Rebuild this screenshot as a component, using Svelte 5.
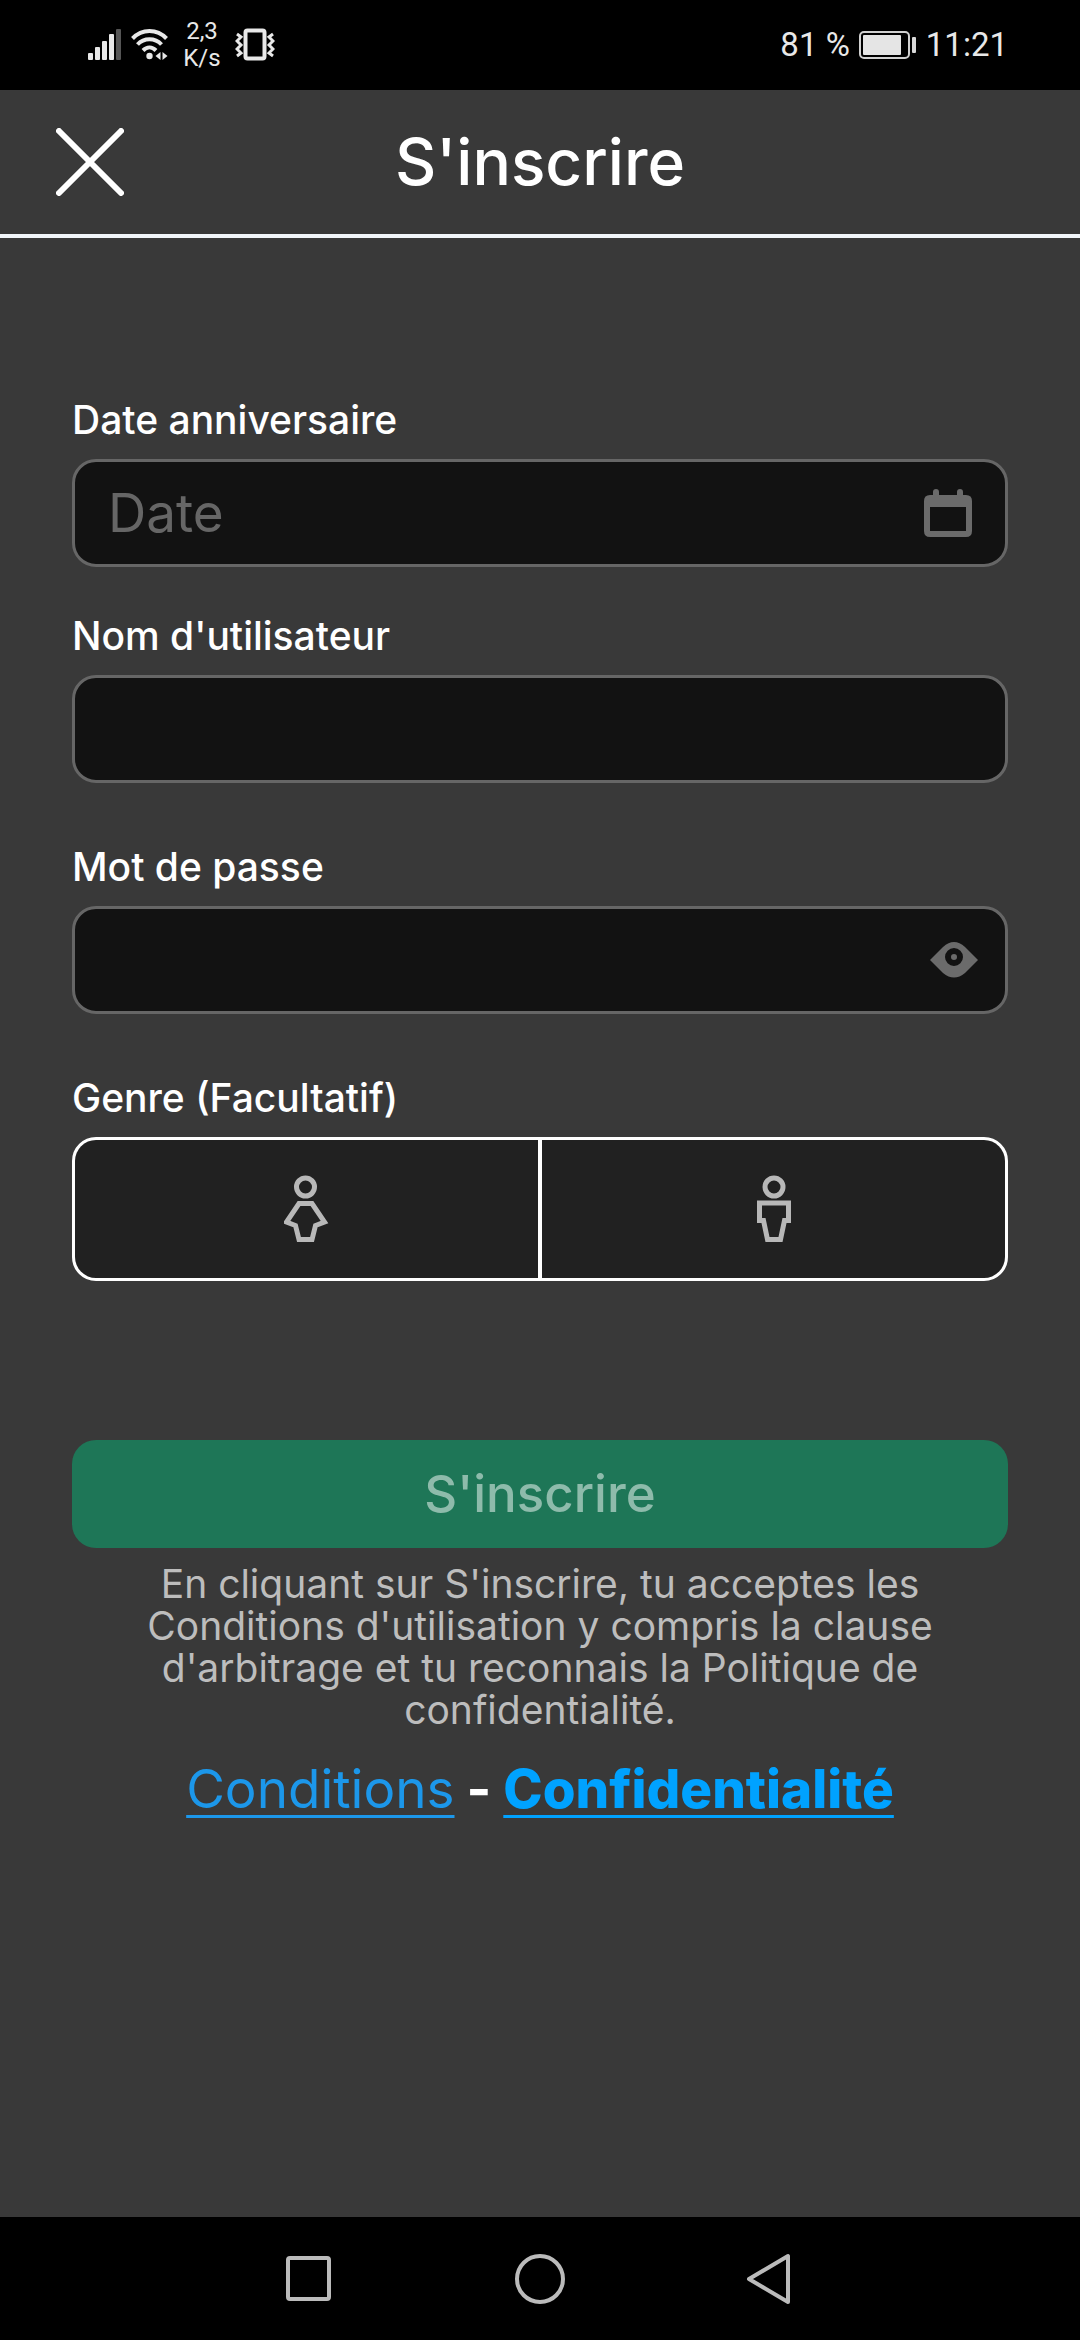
<script lang="ts">
    let birthday = '';
    let username = '';
    let password = '';
    let showPassword = false;
    let gender = '';

    const signalBars = [
        { x: 0, height: 7 },
        { x: 7, height: 13 },
        { x: 14, height: 19 },
        { x: 21, height: 26 },
    ];

    function togglePassword() {
        showPassword = !showPassword;
    }
</script>

<div class="screen">
    <div class="status-bar">
        <div class="status-group status-left">
            <svg class="signal" width="34" height="32" viewBox="0 0 34 32" aria-hidden="true">
                {#each signalBars as bar}
                    <rect x={bar.x} y={31 - bar.height} width="5" height={bar.height} rx="1" fill="#e8e8e8" />
                {/each}
                <rect x="28" y="0" width="5" height="31" rx="1" fill="#555" />
            </svg>
            <svg width="38" height="32" viewBox="0 0 38 32" fill="none" stroke="#e8e8e8" stroke-width="4" aria-hidden="true">
                <path d="M1.500 9.500C11-.5 26-.5 35.500 9.500" />
                <path d="M6.500 15.500C13 8.500 24 8.500 30.500 15.500" />
                <path d="M12 21.500C16 17.500 21 17.500 25 21.500" />
                <circle cx="18.500" cy="27" r="3.200" fill="#e8e8e8" stroke="none" />
                <path d="M29.500 23v8l-5-4zM31.500 23v8l5-4z" fill="#e8e8e8" stroke="none" />
            </svg>
            <div class="speed"><span>2,3</span><span>K/s</span></div>
            <svg width="40" height="34" viewBox="0 0 40 34" fill="none" stroke="#e8e8e8" stroke-width="3" aria-hidden="true">
                <rect x="10.500" y="2.500" width="19" height="28" rx="2" stroke-width="4" />
                <path d="M2 6l4 3-4 4 4 4-4 4 4 4-4 3M38 6l-4 3 4 4-4 4 4 4-4 4 4 3" />
            </svg>
        </div>
        <div class="status-group status-right">
            <span>81 %</span>
            <svg width="58" height="30" viewBox="0 0 58 30" aria-hidden="true">
                <rect x="1" y="2" width="49" height="26" rx="4" fill="none" stroke="#d0d0d0" stroke-width="2" />
                <rect x="4" y="5" width="38" height="20" rx="1" fill="#e5e5e5" />
                <rect x="53" y="7" width="4" height="16" rx="1" fill="#d8d8d8" />
            </svg>
            <span>11:21</span>
        </div>
    </div>

    <header class="top-bar">
        <button class="close-button" type="button" aria-label="Fermer">
            <svg width="68" height="68" viewBox="0 0 68 68" fill="none" stroke="#fff" stroke-width="6" stroke-linecap="round">
                <path d="M3 3l62 62M65 3L3 65" />
            </svg>
        </button>
        <h1>S'inscrire</h1>
    </header>

    <main>
        <form on:submit|preventDefault>
            <div class="field birthday">
                <label for="birthday">Date anniversaire</label>
                <div class="input-box">
                    <input id="birthday" type="text" placeholder="Date" bind:value={birthday} />
                    <svg class="calendar" width="48" height="48" viewBox="0 0 48 48" fill="#6b6b6b" aria-hidden="true">
                        <path d="M9 8V3q0-3 3-3t3 3v3h18V3q0-3 3-3t3 3v3h3q6 0 6 6v30q0 6-6 6H6q-6 0-6-6V12q0-6 6-6h3zM6 18v24h36V18z" fill-rule="evenodd" />
                    </svg>
                </div>
            </div>

            <div class="field">
                <label for="username">Nom d'utilisateur</label>
                <div class="input-box">
                    <input id="username" type="text" bind:value={username} />
                </div>
            </div>

            <div class="field">
                <label for="password">Mot de passe</label>
                <div class="input-box">
                    <input id="password" type={showPassword ? 'text' : 'password'} value={password} on:input={(e) => (password = e.currentTarget.value)} />
                    <button class="eye-button" type="button" aria-label="Afficher le mot de passe" on:click={togglePassword}>
                        <svg width="48" height="36" viewBox="0 0 48 36">
                            <path d="M0 18L13 5q11-10 22 0l13 13-13 13q-11 9-22 0z" fill="#6b6b6b" />
                            <circle cx="24" cy="15" r="6" fill="#6b6b6b" stroke="#121212" stroke-width="6" />
                        </svg>
                    </button>
                </div>
            </div>

            <fieldset class="gender">
                <legend>Genre (Facultatif)</legend>
                <div class="gender-box">
                    <label class:selected={gender === 'female'}>
                        <input type="radio" name="gender" value="female" aria-label="Femme" bind:group={gender} />
                        <svg width="46" height="68" viewBox="0 0 46 68" fill="none" stroke="#b8b8b8" stroke-width="5">
                            <circle cx="21.500" cy="12" r="9" />
                            <path d="M15 28.500h13L40.500 47l-9 3.500L28 64.500H15l-3.500-14L2.500 47z" />
                        </svg>
                    </label>
                    <label class:selected={gender === 'male'}>
                        <input type="radio" name="gender" value="male" aria-label="Homme" bind:group={gender} />
                        <svg width="46" height="68" viewBox="0 0 46 68" fill="none" stroke="#b8b8b8" stroke-width="5">
                            <circle cx="23" cy="12" r="9" />
                            <path d="M8.500 28h29v17.500h-4L29.500 64.500h-13l-4-19h-4z" />
                        </svg>
                    </label>
                </div>
            </fieldset>

            <button class="submit-button" type="submit" disabled>S'inscrire</button>
        </form>

        <p class="disclaimer">
            En cliquant sur S'inscrire, tu acceptes les Conditions d'utilisation y compris la clause
            d'arbitrage et tu reconnais la Politique de confidentialité.
        </p>

        <div class="links">
            <a href="#conditions">Conditions</a>
            <span>-</span>
            <a class="strong" href="#confidentialite">Confidentialité</a>
        </div>
    </main>

    <nav class="system-nav" aria-label="Navigation">
        <button type="button" aria-label="Applications récentes">
            <svg width="52" height="52" viewBox="0 0 52 52"><rect x="5" y="5" width="41" height="41" rx="2" /></svg>
        </button>
        <button type="button" aria-label="Accueil">
            <svg width="52" height="52" viewBox="0 0 52 52"><circle cx="26" cy="26" r="23" /></svg>
        </button>
        <button type="button" aria-label="Retour">
            <svg width="52" height="52" viewBox="0 0 52 52"><path d="M43 3v46L4 26z" stroke-linejoin="round" /></svg>
        </button>
    </nav>
</div>

<style>
    :global(body) {
        background: #393939;
    }
    .screen {
        min-height: 100vh;
        display: flex;
        flex-direction: column;
        background: #393939;
        color: #fff;
        font-family: Inter, "Open Sans", sans-serif;
    }
    button {
        border: none;
        background: none;
        padding: 0;
        font-family: inherit;
    }
    svg { display: block; flex-shrink: 0; }

    .status-bar {
        height: 90px;
        padding: 0 72px 0 88px;
        box-sizing: border-box;
        background: #000;
        color: #e8e8e8;
        display: flex;
        align-items: center;
        justify-content: space-between;
        font-family: Roboto, sans-serif;
    }
    .status-group { display: flex; align-items: center; gap: 9px; }
    .status-right { font-size: 33px; line-height: 40px; }
    .speed {
        display: flex;
        flex-direction: column;
        align-items: center;
        width: 48px;
        font-size: 24px;
        line-height: 27px;
    }

    .top-bar {
        height: 148px;
        box-sizing: border-box;
        border-bottom: 4px solid #f2f6fa;
        padding: 0 56px;
        display: grid;
        grid-template-columns: 68px 1fr 68px;
        align-items: center;
    }
    .top-bar h1 {
        margin: 0;
        text-align: center;
        font-size: 64px;
        line-height: 72px;
        font-weight: 500;
    }

    main {
        flex: 1;
        padding: 160px 72px 48px;
    }
    .field { margin-bottom: 62px; }
    .birthday { margin-bottom: 47px; }
    .field label,
    .gender legend {
        display: block;
        padding: 0;
        margin-bottom: 17px;
        font-size: 39px;
        line-height: 44px;
        font-weight: 500;
    }
    .input-box {
        height: 108px;
        box-sizing: border-box;
        border: 3px solid #666;
        border-radius: 24px;
        background: #121212;
        display: flex;
        align-items: center;
        padding: 0 33px;
    }
    .input-box input {
        flex: 1;
        min-width: 0;
        border: none;
        outline: none;
        padding: 0;
        background: transparent;
        color: #fff;
        font-family: inherit;
        font-size: 53px;
        line-height: 60px;
    }
    .input-box input::placeholder { color: #666; opacity: 1; }
    .eye-button { margin-right: -6px; }

    .gender {
        border: none;
        margin: 0;
        padding: 0;
        min-width: 0;
    }
    .gender-box {
        height: 144px;
        box-sizing: border-box;
        border: 3px solid #fff;
        border-radius: 24px;
        background: #fff;
        overflow: hidden;
        display: grid;
        grid-template-columns: 1fr 1fr;
        gap: 4px;
    }
    .gender-box label {
        background: #212121;
        display: flex;
        align-items: center;
        justify-content: center;
    }
    .gender-box label.selected { background: #393939; }
    .gender-box input {
        appearance: none;
        width: 0;
        height: 0;
        margin: 0;
    }

    .submit-button {
        display: block;
        width: 100%;
        height: 108px;
        margin-top: 159px;
        border-radius: 24px;
        background: #1e7657;
        color: #8ebbab;
        font-size: 51px;
        line-height: 60px;
        font-weight: 500;
    }
    .disclaimer {
        margin: 15px 56px 0;
        text-align: center;
        color: #bdbdbd;
        font-size: 39px;
        line-height: 42px;
    }
    .links {
        display: flex;
        justify-content: center;
        align-items: baseline;
        gap: 12px;
        margin-top: 28px;
        font-size: 53px;
        line-height: 60px;
        font-weight: 700;
    }
    .links a {
        color: #1c97ea;
        font-weight: 400;
        text-decoration: underline;
        text-decoration-thickness: 3px;
        text-underline-offset: 7px;
        text-decoration-skip-ink: none;
    }
    .links .strong { color: #00a2ff; font-weight: 800; }

    .system-nav {
        height: 123px;
        background: #000;
        display: flex;
        align-items: center;
        justify-content: center;
    }
    .system-nav button {
        width: 231px;
        height: 100%;
        display: flex;
        align-items: center;
        justify-content: center;
    }
    .system-nav svg { fill: none; stroke: #bbb; stroke-width: 4; }
</style>
